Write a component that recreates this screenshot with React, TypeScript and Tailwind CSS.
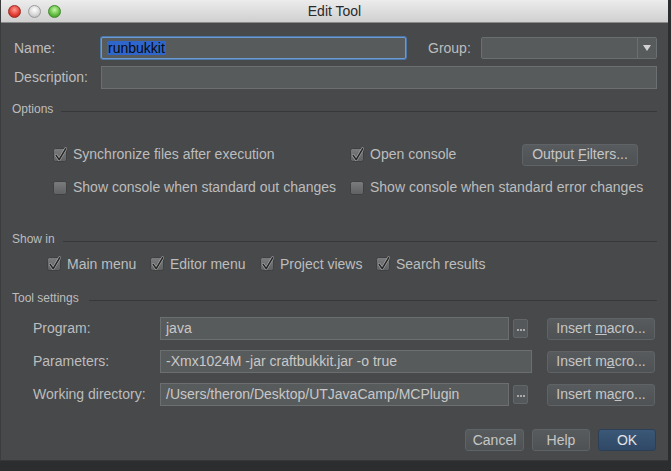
import React from "react";

function Check({ checked }: { checked: boolean }) {
  return (
    <svg width="14" height="14" viewBox="0 0 14 14" className="shrink-0 overflow-visible">
      <defs>
        <linearGradient id="cbg" x1="0" y1="0" x2="0" y2="1">
          <stop offset="0" stopColor="#7a7c7e" />
          <stop offset="1" stopColor="#5e6062" />
        </linearGradient>
      </defs>
      <rect x="0.5" y="0.5" width="13" height="13" rx="2" fill="url(#cbg)" stroke="#3e4042" />
      {checked && (
        <>
          <path d="M3.2 7.4 L6.2 11.6 L12.6 0.8" fill="none" stroke="#d6d6d6" strokeWidth="2.8" strokeLinecap="round" strokeLinejoin="round" opacity="0.6" />
          <path d="M3.2 7.4 L6.2 11.6 L12.6 0.8" fill="none" stroke="#262626" strokeWidth="1.6" strokeLinecap="round" strokeLinejoin="round" />
        </>
      )}
    </svg>
  );
}

function CheckItem({ checked, label, w }: { checked: boolean; label: string; w?: string }) {
  return (
    <div className={"flex items-center gap-[6px] " + (w ?? "")}>
      <Check checked={checked} />
      <span className="text-[14px] text-[#bdbdbd] whitespace-nowrap">{label}</span>
    </div>
  );
}

function Btn({ children, w, primary }: { children: React.ReactNode; w: string; primary?: boolean }) {
  return (
    <div
      className={
        "h-[22px] flex items-center justify-center rounded-[3px] border text-[14px] whitespace-nowrap " +
        w +
        (primary
          ? " bg-gradient-to-b from-[#3b5878] to-[#2f4866] border-[#2c3f57] text-[#e2e2e2]"
          : " bg-gradient-to-b from-[#585b5d] to-[#4f5254] border-[#606365] text-[#c6c6c6]")
      }
    >
      <span>{children}</span>
    </div>
  );
}

function Header({ label, lineLeft }: { label: string; lineLeft: string }) {
  return (
    <div className="flex items-center h-[14px] -ml-[2px]">
      <span className="text-[12px] text-[#bdbdbd] whitespace-nowrap">{label}</span>
      <div className={"flex-1 h-px bg-[#36383a] mt-[5px] " + lineLeft} />
    </div>
  );
}

function Field({ w, text }: { w: string; text?: string }) {
  return (
    <div className={"h-[23px] bg-[#585b5c] border border-[#6c6f71] flex items-center px-[5px] text-[14px] text-[#c8c8c8] whitespace-nowrap " + w}>
      {text}
    </div>
  );
}

function Dots() {
  return (
    <div className="w-[15px] h-[19px] rounded-[2px] bg-[#55585a] border border-[#636668] flex items-center justify-center gap-[1px] pt-[2px]">
      <div className="w-[2px] h-[2px] bg-[#a9a9a9]" />
      <div className="w-[2px] h-[2px] bg-[#a9a9a9]" />
      <div className="w-[2px] h-[2px] bg-[#a9a9a9]" />
    </div>
  );
}

export default function App() {
  return (
    <div className="w-[671px] h-[471px] bg-[#2b2d2f] overflow-hidden font-['Liberation_Sans',Arial,sans-serif]">
      <div className="w-[668px] h-[461px] bg-[#47494b] flex flex-col border-l border-[#3a3c3e] border-b border-b-[#353738]">
        {/* Title bar */}
        <div className="h-[23px] shrink-0 flex items-center relative bg-gradient-to-b from-[#ececec] to-[#d0d0d0] border-b border-[#8a8a8a]">
          <div className="flex items-center gap-[7px] pl-[7px]">
            <div className="w-[13px] h-[13px] rounded-full bg-[radial-gradient(circle_at_50%_35%,#ff9a92,#e0392f_60%,#a8231b)] border border-[#9c2a22]" />
            <div className="w-[13px] h-[13px] rounded-full bg-[radial-gradient(circle_at_50%_35%,#ffffff,#d4d4d4_60%,#a9a9a9)] border border-[#9a9a9a]" />
            <div className="w-[13px] h-[13px] rounded-full bg-[radial-gradient(circle_at_50%_35%,#c6f5a6,#5dbb3d_60%,#3a8a22)] border border-[#3f8a2a]" />
          </div>
          <div className="flex-1 text-center text-[14px] text-[#2a2a2a] pr-[60px]">Edit Tool</div>
        </div>

        <div className="flex flex-col pl-[13px] pr-[11px] pt-[14px]">
          {/* Name row */}
          <div className="flex items-center h-[22px]">
            <span className="w-[87px] text-[14px] text-[#bdbdbd]">Name:</span>
            <div className="w-[305px] h-[22px] rounded-[2px] border border-[#6a9bd3] shadow-[0_0_0_1px_#4e78a8] bg-[#585b5c] flex items-center pl-[5px]">
              <span className="bg-[#2f66cc] text-[14px] text-[#0a0a0a] leading-[14px] px-[1px]">runbukkit</span>
            </div>
            <span className="ml-[22px] w-[53px] text-[14px] text-[#bdbdbd]">Group:</span>
            <div className="w-[176px] h-[22px] rounded-[2px] bg-[#585b5c] border border-[#6c6f71] flex">
              <div className="flex-1" />
              <div className="w-[19px] border-l border-[#6c6f71] flex items-center justify-center">
                <svg width="8" height="6" viewBox="0 0 8 6"><path d="M0 0 H8 L4 6 Z" fill="#d2d2d2" /></svg>
              </div>
            </div>
          </div>

          {/* Description */}
          <div className="flex items-center h-[22px] mt-[7px]">
            <span className="w-[87px] text-[14px] text-[#bdbdbd]">Description:</span>
            <Field w="w-[556px]" />
          </div>

          {/* Options */}
          <div className="mt-[14px]">
            <Header label="Options" lineLeft="ml-[8px]" />
          </div>

          <div className="grid grid-cols-[297px_172px_116px] items-center gap-y-[10px] pl-[39px] mt-[27px]">
            <div className="h-[23px] flex items-center"><CheckItem checked label="Synchronize files after execution" /></div>
            <div className="h-[23px] flex items-center"><CheckItem checked label="Open console" /></div>
            <Btn w="w-[116px]">
              Output <span className="underline">F</span>ilters...
            </Btn>
            <div className="h-[23px] flex items-center"><CheckItem checked={false} label="Show console when standard out changes" /></div>
            <div className="h-[23px] flex items-center col-span-2"><CheckItem checked={false} label="Show console when standard error changes" /></div>
          </div>

          {/* Show in */}
          <div className="mt-[33px]">
            <Header label="Show in" lineLeft="ml-[8px]" />
          </div>
          <div className="flex items-center pl-[33px] mt-[7px] h-[22px]">
            <CheckItem checked label="Main menu" w="w-[103px]" />
            <CheckItem checked label="Editor menu" w="w-[110px]" />
            <CheckItem checked label="Project views" w="w-[116px]" />
            <CheckItem checked label="Search results" />
          </div>

          {/* Tool settings */}
          <div className="mt-[16px]">
            <Header label="Tool settings" lineLeft="ml-[10px]" />
          </div>

          <div className="flex flex-col gap-[10px] mt-[12px] pl-[19px]">
            <div className="flex items-center">
              <span className="w-[127px] text-[14px] text-[#bdbdbd]">Program:</span>
              <Field w="w-[349px]" text="java" />
              <div className="ml-[4px]"><Dots /></div>
              <div className="ml-[19px]"><Btn w="w-[108px]">Insert <span className="underline">m</span>acro...</Btn></div>
            </div>
            <div className="flex items-center">
              <span className="w-[127px] text-[14px] text-[#bdbdbd]">Parameters:</span>
              <Field w="w-[372px]" text="-Xmx1024M -jar craftbukkit.jar -o true" />
              <div className="ml-[15px]"><Btn w="w-[108px]">Insert m<span className="underline">a</span>cro...</Btn></div>
            </div>
            <div className="flex items-center">
              <span className="w-[127px] text-[14px] text-[#bdbdbd]">Working directory:</span>
              <Field w="w-[349px]" text="/Users/theron/Desktop/UTJavaCamp/MCPlugin" />
              <div className="ml-[4px]"><Dots /></div>
              <div className="ml-[19px]"><Btn w="w-[108px]">Insert ma<span className="underline">c</span>ro...</Btn></div>
            </div>
          </div>

          {/* Bottom buttons */}
          <div className="flex justify-end gap-[8px] mt-[23px] pr-[1px]">
            <Btn w="w-[59px]">Cancel</Btn>
            <Btn w="w-[58px]">Help</Btn>
            <Btn w="w-[58px]" primary>OK</Btn>
          </div>
        </div>
      </div>
    </div>
  );
}
